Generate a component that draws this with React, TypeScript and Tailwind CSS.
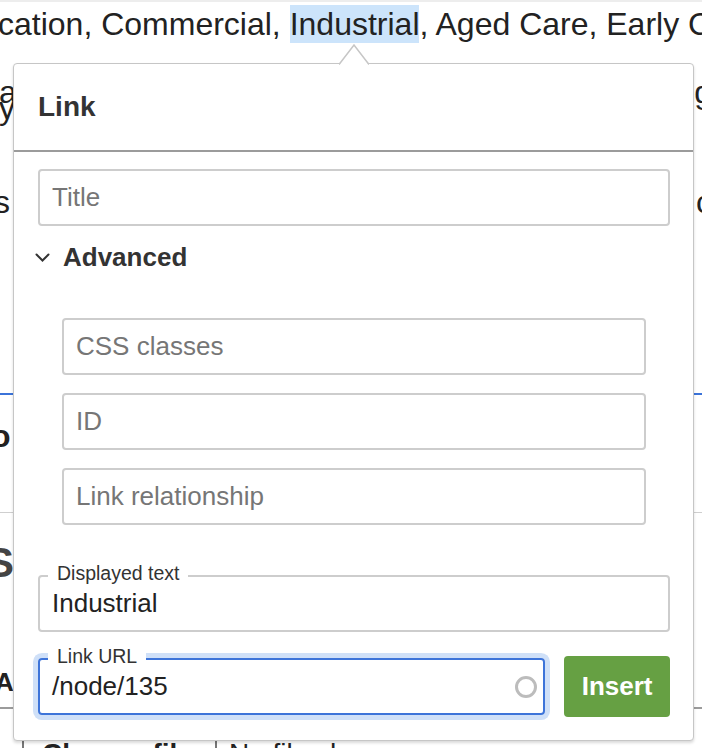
import React from "react";

function Field({ placeholder, className = "" }: { placeholder: string; className?: string }) {
  return (
    <input
      type="text"
      placeholder={placeholder}
      className={`block h-[57px] w-full rounded-[4px] border-2 border-[#cdcdcd] bg-white px-[12px] text-[26px] text-[#222] outline-none placeholder:text-[#767676] ${className}`}
    />
  );
}

function LinkBalloon() {
  return (
    <div className="absolute left-[13px] top-[63px] w-[681px] rounded-[4px] border border-[#c6c6c6] bg-white shadow-[0_2px_3px_rgba(0,0,0,0.15)]">
      {/* arrow */}
      <svg className="absolute left-[325px] top-[-20px]" width="30" height="21" viewBox="0 0 30 21">
        <polygon points="0,21 15,1 30,21" fill="#fff" />
        <polyline points="0,20.5 15,1 30,20.5" fill="none" stroke="#c6c6c6" strokeWidth="1.5" />
      </svg>

      <div className="flex h-[88px] items-center border-b-2 border-[#9b9b9b] px-[24px]">
        <h2 className="text-[28px] font-bold text-[#333]">Link</h2>
      </div>

      <div className="pb-[23px] pl-[24px] pr-[23px] pt-[17px]">
        <Field placeholder="Title" />

        <div className="mt-[11px] flex h-[40px] items-center -ml-[3px]">
          <svg width="15" height="9" viewBox="0 0 15 9" className="mr-[13px]">
            <path d="M1.5 1.5 L7.5 7.5 L13.5 1.5" fill="none" stroke="#333" strokeWidth="2" strokeLinecap="round" />
          </svg>
          <span className="text-[26px] font-bold text-[#333]">Advanced</span>
        </div>

        <div className="mt-[41px] flex flex-col gap-[18px] px-[24px]">
          <Field placeholder="CSS classes" />
          <Field placeholder="ID" />
          <Field placeholder="Link relationship" />
        </div>

        <div className="relative mt-[50px] flex h-[57px] items-center rounded-[4px] border-2 border-[#cdcdcd] px-[12px]">
          <span className="absolute left-[8px] top-[-15px] bg-white px-[9px] text-[19.5px] leading-[22px] text-[#333]">
            Displayed text
          </span>
          <span className="text-[26px] text-[#222]">Industrial</span>
        </div>

        <div className="mt-[24px] flex h-[61px] items-center gap-[19px]">
          <div className="relative flex h-[57px] w-[508px] items-center rounded-[4px] border-2 border-[#3d74d9] pl-[12px] pr-[6px] shadow-[0_0_0_5px_#cfe0f8]">
            <span className="absolute left-[8px] top-[-15px] bg-white px-[9px] text-[19.5px] leading-[22px] text-[#333]">
              Link URL
            </span>
            <span className="flex-1 text-[26px] text-[#222]">/node/135</span>
            <div className="h-[22px] w-[22px] rounded-full border-[3px] border-[#bcbcbc] blur-[0.7px]" />
          </div>
          <button className="h-[61px] w-[106px] rounded-[4px] bg-[#66a043] text-[26px] font-bold text-white">
            Insert
          </button>
        </div>
      </div>
    </div>
  );
}

export default function App() {
  return (
    <div className="relative h-[748px] w-[702px] overflow-hidden bg-white font-['Liberation_Sans',Arial,sans-serif] text-[#222]">
      <div className="h-[2px] bg-[#ededed]" />

      <div className="-ml-[2px] mt-[3px] h-[38px] whitespace-nowrap text-[32px] leading-[38px]">
        cation, Commercial, <span className="bg-[#cce4fb] py-[1px]">Industrial</span>, Aged Care, Early Childhood
      </div>

      <div className="mt-[41px] flex h-[32px] justify-between text-[32px] leading-[16px]">
        <span className="-ml-[1px]">
          al
          <br />y
        </span>
        <span className="-mr-[10px]">g</span>
      </div>

      <div className="mt-[67px] flex h-[38px] justify-between text-[32px] leading-[38px]">
        <span className="-ml-[6px]">s</span>
        <span className="-mr-[10px]">c</span>
      </div>

      <div className="mt-[172px] h-[2px] bg-[#3b73d9]" />

      <div className="mt-[22px] h-[38px] text-[32px] font-bold leading-[38px]">
        <span className="-ml-[9px] inline-block">o</span>
      </div>

      <div className="mt-[57px] h-[1px] bg-[#cfcfcf]" />

      <div className="mt-[26px] h-[48px] text-[42px] font-bold leading-[48px] text-[#444]">
        <span className="-ml-[14px] inline-block">S</span>
      </div>

      <div className="mt-[80px] h-[30px] text-[26px] font-bold leading-[30px]">
        <span className="-ml-[5px] inline-block">Ac</span>
      </div>

      <div className="mt-[10px] h-[2px] bg-[#9b9b9b]" />

      <div className="mt-[28px] flex h-[34px] items-start whitespace-nowrap text-[28px] leading-[34px]">
        <div className="ml-[22px] h-[34px] border-l-2 border-[#777]" />
        <span className="ml-[18px] font-bold">Choose file</span>
        <div className="ml-[22px] h-[34px] border-l-2 border-[#777]" />
        <span className="ml-[12px]">No file chosen</span>
      </div>

      <LinkBalloon />
    </div>
  );
}
